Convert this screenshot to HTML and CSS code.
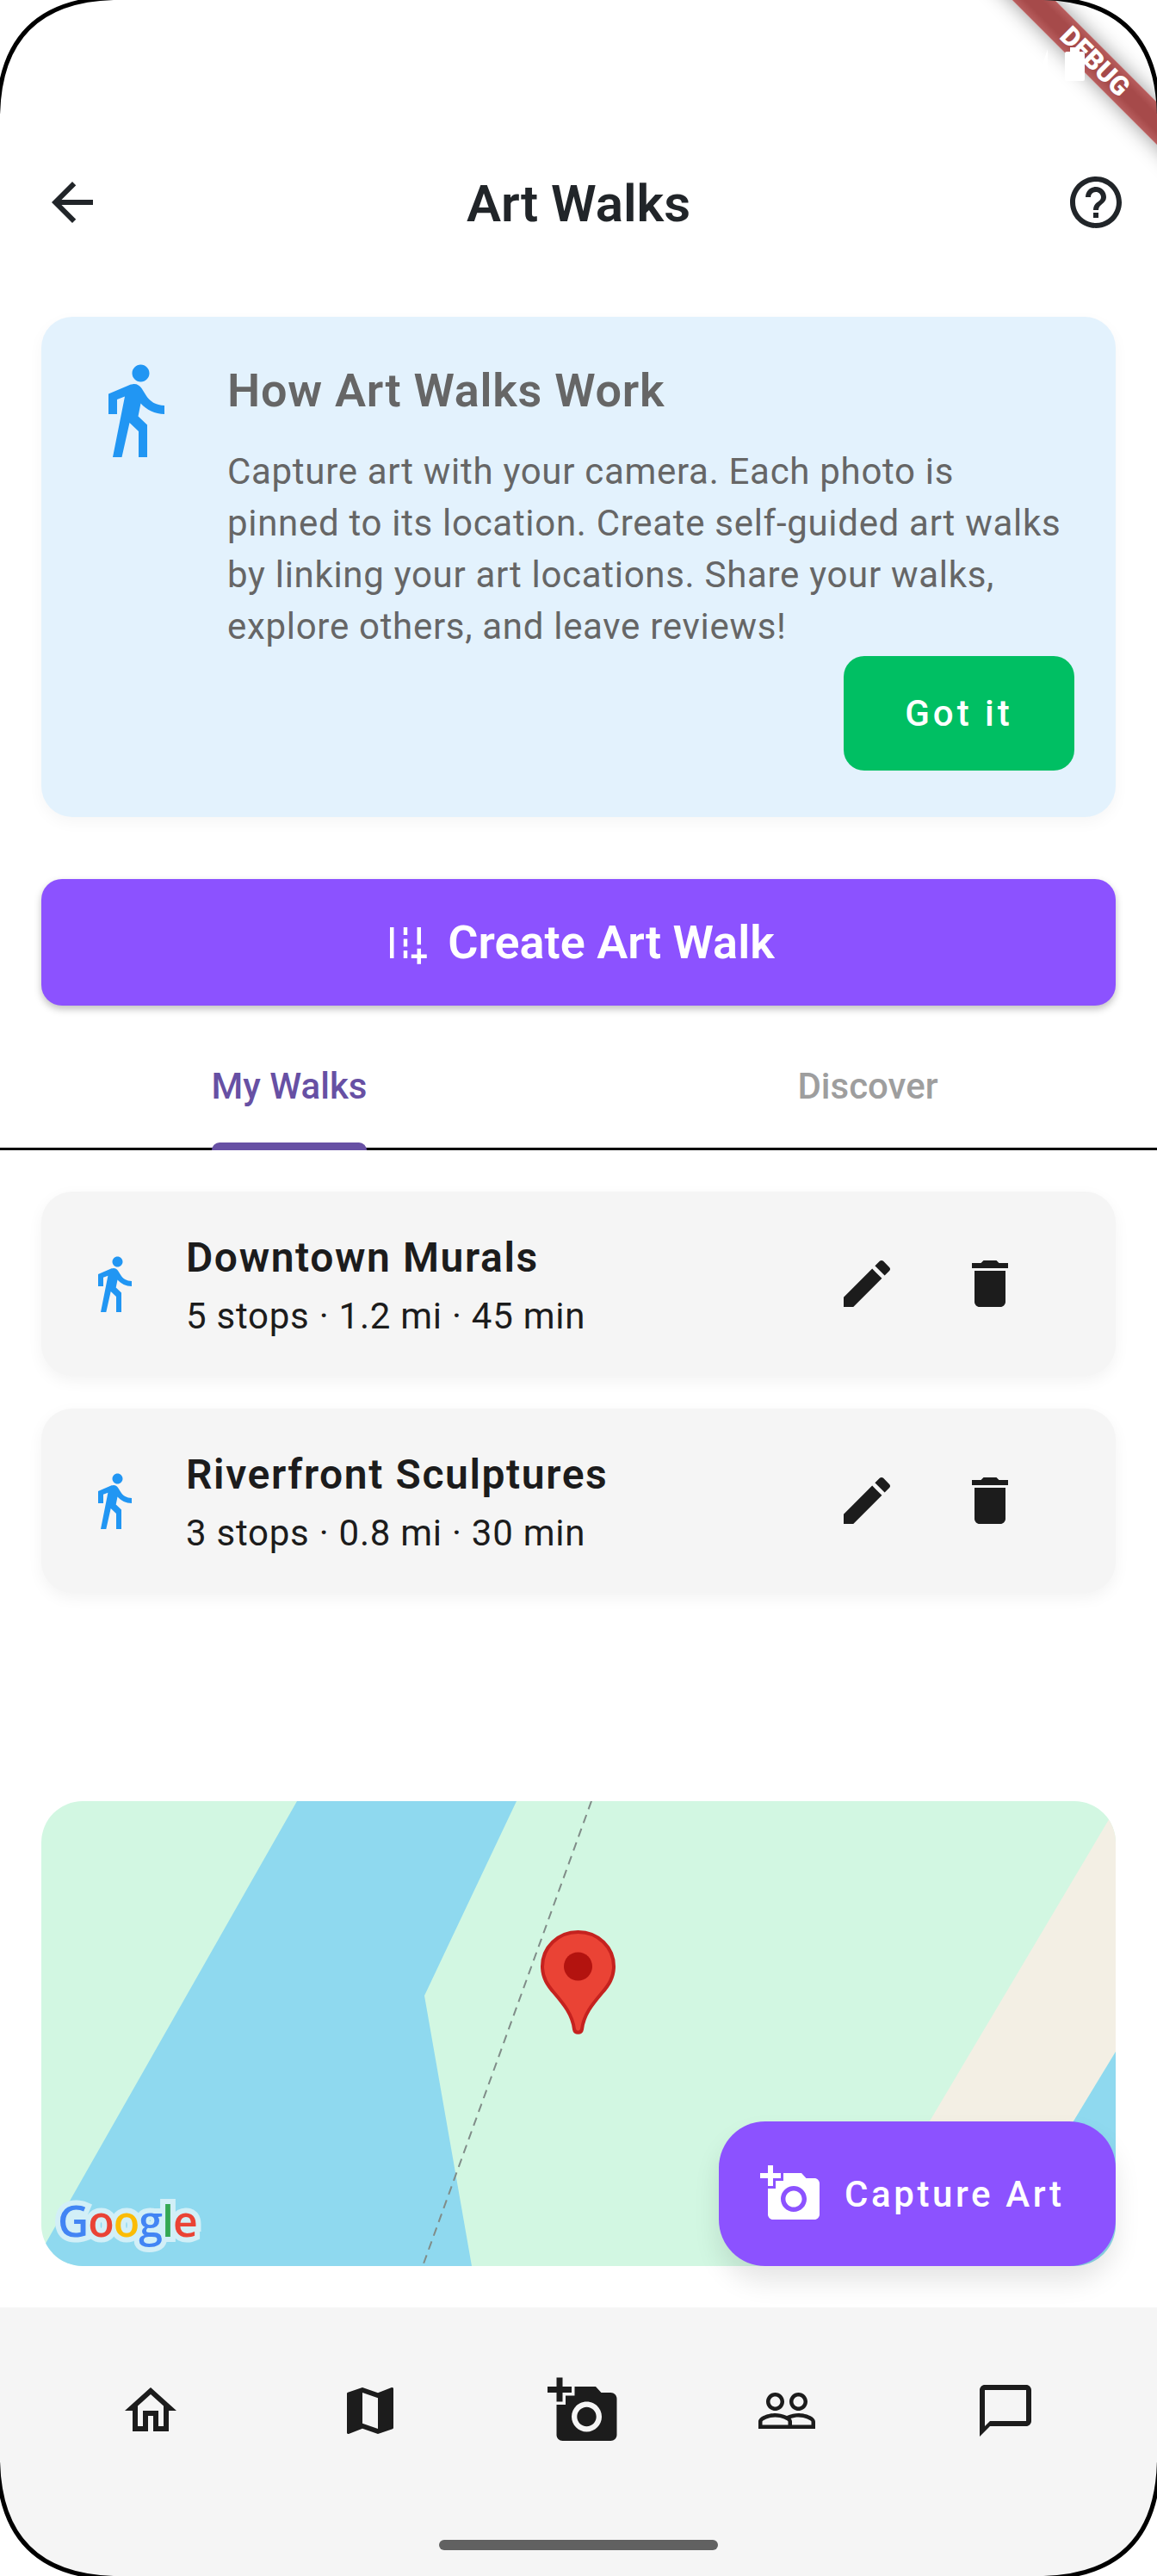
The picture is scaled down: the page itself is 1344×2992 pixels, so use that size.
FILE: index.html
```html
<!DOCTYPE html>
<html lang="en">
<head>
  <meta charset="UTF-8" />
  <meta name="viewport" content="width=device-width, initial-scale=1.0"/>
  <title>Art Walks</title>
  <link rel="stylesheet" href="styles.css">
</head>
<body>
  <svg class="sprite" aria-hidden="true">
    <symbol id="i-walk" viewBox="0 0 24 24"><path d="M13.5 5.5c1.1 0 2-.9 2-2s-.9-2-2-2-2 .9-2 2 .9 2 2 2zM9.8 8.9L7 23h2.1l1.8-8 2.1 2v6h2v-7.5l-2.1-2 .6-3C14.8 12 16.8 13 19 13v-2c-1.9 0-3.5-1-4.3-2.4l-1-1.6c-.4-.6-1-1-1.7-1-.3 0-.5.1-.8.1L6 8.3V13h2V9.6l1.8-.7"/></symbol>
    <symbol id="i-edit" viewBox="0 0 24 24"><path d="M3 17.25V21h3.75L17.81 9.94l-3.75-3.75L3 17.25zM20.71 7.04c.39-.39.39-1.02 0-1.41l-2.34-2.34c-.39-.39-1.02-.39-1.41 0l-1.83 1.83 3.75 3.75 1.83-1.83z"/></symbol>
    <symbol id="i-delete" viewBox="0 0 24 24"><path d="M6 19c0 1.1.9 2 2 2h8c1.1 0 2-.9 2-2V7H6v12zM19 4h-3.5l-1-1h-5l-1 1H5v2h14V4z"/></symbol>
    <symbol id="i-camera" viewBox="0 0 24 24"><path d="M3 4V1h2v3h3v2H5v3H3V6H0V4h3zm3 6V7h3V4h7l1.83 2H21c1.1 0 2 .9 2 2v12c0 1.1-.9 2-2 2H5c-1.1 0-2-.9-2-2V10h3zm7 9c2.76 0 5-2.24 5-5s-2.24-5-5-5-5 2.24-5 5 2.24 5 5 5zm-3.2-5c0 1.77 1.43 3.2 3.2 3.2s3.2-1.43 3.2-3.2-1.43-3.2-3.2-3.2-3.2 1.43-3.2 3.2z"/></symbol>
    <symbol id="i-corner" viewBox="0 0 132 132"><path class="corner-fill" d="M0 0H132C45 0 0 45 0 132z"/><path class="corner-line" d="M-2.4 132C0 45 45 0 132 -2.4"/></symbol>
  </svg>

  <div class="phone">
    <header class="app-bar">
      <svg class="icon icon-back" viewBox="0 0 24 24"><path d="M20 11H7.83l5.59-5.59L12 4l-8 8 8 8 1.41-1.41L7.83 13H20v-2z"/></svg>
      <h1 class="app-title">Art Walks</h1>
      <svg class="icon icon-help" viewBox="0 0 24 24"><path d="M11 18h2v-2h-2v2zm1-16C6.48 2 2 6.48 2 12s4.48 10 10 10 10-4.48 10-10S17.52 2 12 2zm0 18c-4.41 0-8-3.59-8-8s3.59-8 8-8 8 3.59 8 8-3.59 8-8 8zm0-14c-2.21 0-4 1.79-4 4h2c0-1.1.9-2 2-2s2 .9 2 2c0 2-3 1.75-3 5h2c0-2.25 3-2.5 3-5 0-2.21-1.79-4-4-4z"/></svg>
    </header>

    <section class="info-card">
      <svg class="info-icon"><use href="#i-walk"/></svg>
      <div class="info-body">
        <h2 class="info-title">How Art Walks Work</h2>
        <p class="info-text">Capture art with your camera. Each photo is pinned to its location. Create self-guided art walks by linking your art locations. Share your walks, explore others, and leave reviews!</p>
        <button class="got-it">Got it</button>
      </div>
    </section>

    <button class="create-btn">
      <svg class="create-icon" viewBox="0 0 24 24"><path d="M20 18v-3h-2v3h-3v2h3v3h2v-3h3v-2h-3zM18 4h2v9h-2V4zM4 4h2v16H4V4zM11 4h2v4h-2V4zM11 10h2v4h-2v-4zM11 16h2v4h-2v-4z"/></svg>
      Create Art Walk
    </button>

    <nav class="tabs">
      <div class="tab active"><span>My Walks</span></div>
      <div class="tab"><span>Discover</span></div>
    </nav>

    <div class="walk-list">
      <div class="walk-card">
        <svg class="walk-icon"><use href="#i-walk"/></svg>
        <div class="walk-info">
          <div class="walk-name">Downtown Murals</div>
          <div class="walk-meta">5 stops · 1.2 mi · 45 min</div>
        </div>
        <svg class="icon action"><use href="#i-edit"/></svg>
        <svg class="icon action"><use href="#i-delete"/></svg>
      </div>
      <div class="walk-card">
        <svg class="walk-icon"><use href="#i-walk"/></svg>
        <div class="walk-info">
          <div class="walk-name">Riverfront Sculptures</div>
          <div class="walk-meta">3 stops · 0.8 mi · 30 min</div>
        </div>
        <svg class="icon action"><use href="#i-edit"/></svg>
        <svg class="icon action"><use href="#i-delete"/></svg>
      </div>
    </div>

    <div class="map">
      <svg class="map-art" viewBox="0 0 1248 540">
        <polygon class="water" points="297,0 552,0 445,226 500,540 -10,540"/>
        <polygon class="sand" points="1248,8 932,540 1097,540 1248,291"/>
        <polygon class="water" points="1248,291 1097,540 1248,540"/>
        <line class="trail" x1="639" y1="0" x2="443" y2="540"/>
        <path class="pin" d="M623.5 152C600 152 582 170 582 192C582 205 588 214 596 223C607 236 617 248 619 265C620 270 627 270 628 265C630 248 640 236 651 223C659 214 665 205 665 192C665 170 647 152 623.5 152Z"/>
        <circle class="pin-dot" cx="623.5" cy="192" r="16.5"/>
      </svg>
      <div class="google"><span class="g-blue">G</span><span class="g-red">o</span><span class="g-yellow">o</span><span class="g-blue">g</span><span class="g-green">l</span><span class="g-red">e</span></div>
      <button class="capture-fab">
        <svg class="icon"><use href="#i-camera"/></svg>
        Capture Art
      </button>
    </div>

    <footer class="bottom-bar">
      <div class="bottom-icons">
        <svg class="icon" viewBox="0 0 24 24"><path d="M12 5.69l5 4.5V18h-2v-6H9v6H7v-7.81l5-4.5M12 3L2 12h3v8h6v-6h2v6h6v-8h3L12 3z"/></svg>
        <svg class="icon" viewBox="0 0 24 24"><path d="M20.5 3l-.16.03L15 5.1 9 3 3.36 4.9c-.21.07-.36.25-.36.48V20.5c0 .28.22.5.5.5l.16-.03L9 18.9l6 2.1 5.64-1.9c.21-.07.36-.25.36-.48V3.5c0-.28-.22-.5-.5-.5zM15 19l-6-2.11V5l6 2.11V19z"/></svg>
        <svg class="icon icon-big"><use href="#i-camera"/></svg>
        <svg class="icon" viewBox="0 0 24 24"><path d="M16.5 13c-1.2 0-3.07.34-4.5 1-1.43-.67-3.3-1-4.5-1C5.33 13 1 14.08 1 16.25V19h22v-2.75c0-2.17-4.33-3.25-6.5-3.25zm-4 4.5h-10v-1.25c0-.54 2.56-1.75 5-1.75s5 1.21 5 1.75v1.25zm9 0H14v-1.25c0-.46-.2-.86-.52-1.22.88-.3 1.96-.53 3.02-.53 2.44 0 5 1.21 5 1.75v1.25zM7.5 12c1.93 0 3.5-1.57 3.5-3.5S9.43 5 7.5 5 4 6.57 4 8.5 5.57 12 7.5 12zm0-5.5c1.1 0 2 .9 2 2s-.9 2-2 2-2-.9-2-2 .9-2 2-2zm9 5.5c1.93 0 3.5-1.57 3.5-3.5S18.43 5 16.5 5 13 6.57 13 8.5s1.57 3.5 3.5 3.5zm0-5.5c1.1 0 2 .9 2 2s-.9 2-2 2-2-.9-2-2 .9-2 2-2z"/></svg>
        <svg class="icon" viewBox="0 0 24 24"><path d="M20 2H4c-1.1 0-2 .9-2 2v18l4-4h14c1.1 0 2-.9 2-2V4c0-1.1-.9-2-2-2zm0 14H6l-2 2V4h16v12z"/></svg>
      </div>
      <div class="home-indicator"></div>
    </footer>

    <!-- debug ribbon and status icons lie over the page -->
    <div class="debug-ribbon">DEBUG</div>
    <div class="status-signal"></div>
    <div class="status-battery"></div>

    <svg class="corner tl"><use href="#i-corner"/></svg>
    <svg class="corner tr"><use href="#i-corner"/></svg>
    <svg class="corner bl"><use href="#i-corner"/></svg>
    <svg class="corner br"><use href="#i-corner"/></svg>
  </div>
</body>
</html>
```

FILE: styles.css
```css
* {
  box-sizing: border-box;
}

html, body {
  margin: 0;
  padding: 0;
  background: #fff;
}

body {
  font-family: Roboto, sans-serif;
  overflow: hidden;
}

.sprite {
  display: none;
}

.phone {
  position: relative;
  width: 1344px;
  height: 2992px;
  overflow: hidden;
  background: #fff;
  display: flex;
  flex-direction: column;
}

.icon {
  width: 72px;
  height: 72px;
  flex: none;
  fill: #1c1c1c;
}

/* app bar */
.app-bar {
  height: 150px;
  margin-top: 160px;
  padding: 0 35px;
  display: grid;
  grid-template-columns: 1fr auto 1fr;
  align-items: center;
}

.app-title {
  margin: 2px 0 0;
  font-size: 60px;
  font-weight: 600;
  color: #212529;
}

.icon-back, .icon-help {
  fill: #212529;
}

.icon-back {
  margin-left: 13px;
}

.icon-help {
  justify-self: end;
}

/* how it works */
.info-card {
  margin: 58px 48px 0;
  height: 581px;
  padding: 48px 48px 0;
  background: #e3f2fd;
  border-radius: 36px;
  box-shadow: 0 6px 18px rgba(0,0,0,0.04);
  display: flex;
  gap: 48px;
}

.info-icon {
  width: 120px;
  height: 120px;
  flex: none;
  fill: #2196f3;
}

.info-body {
  flex: 1;
  display: flex;
  flex-direction: column;
  align-items: flex-start;
}

.info-title {
  margin: 0 0 27px;
  font-size: 54px;
  line-height: 75px;
  font-weight: 600;
  letter-spacing: 0.75px;
  color: #666;
}

.info-text {
  margin: 0;
  font-size: 42px;
  line-height: 60px;
  letter-spacing: 0.7px;
  color: #666;
}

.got-it {
  align-self: flex-end;
  margin-top: 4px;
  width: 268px;
  height: 133px;
  border: none;
  border-radius: 24px;
  background: #00bf63;
  color: #fff;
  font-family: inherit;
  font-size: 42px;
  font-weight: 500;
  letter-spacing: 4px;
}

/* create button */
.create-btn {
  margin: 72px 48px 0;
  height: 147px;
  border: none;
  border-radius: 24px;
  background: #8c52ff;
  color: #fff;
  font-family: inherit;
  font-size: 54px;
  font-weight: 600;
  box-shadow: 0 4px 8px rgba(0,0,0,0.25);
  display: flex;
  align-items: center;
  justify-content: center;
  gap: 22px;
}

.create-icon {
  width: 54px;
  height: 54px;
  fill: #fff;
}

/* tabs */
.tabs {
  height: 168px;
  display: flex;
  border-bottom: 3px solid #000;
}

.tab {
  flex: 1;
  display: flex;
  justify-content: center;
  color: #9e9e9e;
  font-size: 42px;
  font-weight: 500;
}

.tab span {
  position: relative;
  height: 168px;
  line-height: 188px;
}

.tab.active {
  color: #6750a4;
}

.tab.active span::after {
  content: "";
  position: absolute;
  left: 0;
  right: 0;
  bottom: 0;
  height: 9px;
  background: #6750a4;
  border-radius: 9px 9px 0 0;
}

/* walks */
.walk-list {
  margin: 48px 48px 0;
  display: flex;
  flex-direction: column;
  gap: 38px;
}

.walk-card {
  height: 214px;
  padding: 0 110px 0 48px;
  background: #f5f5f5;
  border-radius: 36px;
  box-shadow: 0 6px 18px rgba(0,0,0,0.05);
  display: flex;
  align-items: center;
}

.walk-icon {
  width: 72px;
  height: 72px;
  flex: none;
  fill: #2196f3;
}

.walk-info {
  flex: 1;
  margin-left: 48px;
  padding-top: 6px;
}

.walk-name {
  font-size: 48px;
  line-height: 64px;
  font-weight: 600;
  letter-spacing: 1.6px;
  color: #1c1c1c;
}

.walk-meta {
  margin-top: 6px;
  font-size: 42px;
  line-height: 60px;
  letter-spacing: 0.75px;
  color: #1c1c1c;
}

.action + .action {
  margin-left: 71px;
}

/* map */
.map {
  position: relative;
  margin: 242px 48px 0;
  height: 540px;
  border-radius: 48px;
}

.map-art {
  display: block;
  width: 1248px;
  height: 540px;
  background: #d2f7e2;
  border-radius: 48px;
}

.water {
  fill: #8fd9ef;
}

.sand {
  fill: #f3efe4;
}

.trail {
  stroke: #808c88;
  stroke-width: 2;
  stroke-dasharray: 10 7;
}

.pin {
  fill: #ea4335;
  stroke: #c5221f;
  stroke-width: 4;
}

.pin-dot {
  fill: #b3130f;
}

.google {
  position: absolute;
  left: 19px;
  bottom: 17px;
  z-index: 0;
  font-family: "Open Sans", sans-serif;
  font-size: 50px;
  line-height: 72px;
  font-weight: 600;
  letter-spacing: -1px;
}

.google::before {
  content: "Google";
  position: absolute;
  left: 0;
  top: 0;
  z-index: -1;
  color: #d2eff7;
  -webkit-text-stroke: 12px #d2eff7;
}

.g-blue { color: #4285f4; }
.g-red { color: #ea4335; }
.g-yellow { color: #fbbc05; }
.g-green { color: #34a853; }

.capture-fab {
  position: absolute;
  right: 0;
  bottom: 0;
  width: 461px;
  height: 168px;
  padding: 0 0 0 48px;
  border: none;
  border-radius: 54px;
  background: #8c52ff;
  color: #fff;
  font-family: inherit;
  font-size: 42px;
  font-weight: 500;
  letter-spacing: 3.6px;
  box-shadow: 0 18px 30px rgba(0,0,0,0.1);
  display: flex;
  align-items: center;
  gap: 26px;
}

.capture-fab .icon {
  fill: #fff;
}

/* bottom navigation */
.bottom-bar {
  margin-top: 48px;
  flex: 1;
  background: #f5f5f5;
  display: flex;
  flex-direction: column;
  align-items: center;
  padding-top: 78px;
}

.bottom-icons {
  align-self: stretch;
  padding-left: 139px;
  height: 84px;
  display: grid;
  grid-template-columns: 255px 242px 242px 254px auto;
  align-items: center;
}

.icon-big {
  width: 84px;
  height: 84px;
}

.home-indicator {
  margin-top: 108px;
  width: 324px;
  height: 12px;
  border-radius: 6px;
  background: #616161;
}

/* overlays */
.debug-ribbon {
  position: absolute;
  left: 1072px;
  top: 54px;
  width: 400px;
  height: 35px;
  transform: rotate(45deg);
  background: linear-gradient(#b85e5e, #a64a4a 30%, #a64a4a 70%, #b85e5e);
  box-shadow: 0 0 24px rgba(0,0,0,0.4);
  color: #fff;
  font-size: 31px;
  line-height: 35px;
  font-weight: 900;
  text-align: center;
}

.status-signal {
  position: absolute;
  left: 1205px;
  top: 57px;
  width: 12px;
  height: 36px;
  background: #fff;
  clip-path: polygon(100% 0, 100% 100%, 0 100%);
}

.status-battery {
  position: absolute;
  left: 1237px;
  top: 60px;
  width: 23px;
  height: 34px;
  background: #fff;
  border-radius: 2px;
}

.status-battery::before {
  content: "";
  position: absolute;
  left: 6px;
  top: -5px;
  width: 11px;
  height: 5px;
  background: #fff;
}

.corner {
  position: absolute;
  width: 132px;
  height: 132px;
}

.corner-fill {
  fill: #fff;
}

.corner-line {
  fill: none;
  stroke: #000;
  stroke-width: 5;
}

.corner.tl { left: 0; top: 0; }
.corner.tr { right: 0; top: 0; transform: scaleX(-1); }
.corner.bl { left: 0; bottom: 0; transform: scaleY(-1); }
.corner.br { right: 0; bottom: 0; transform: scale(-1, -1); }
```
